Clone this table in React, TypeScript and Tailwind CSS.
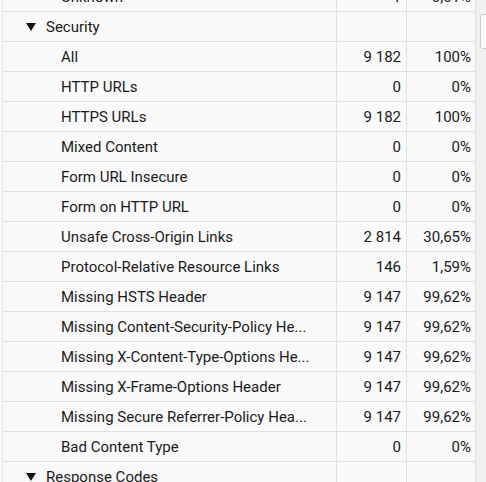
import React from "react";

type Row = { label: string; count?: string; pct?: string; group?: boolean };

const rows: Row[] = [
  { label: "Unknown", count: "1", pct: "0,01%" },
  { label: "Security", group: true },
  { label: "All", count: "9 182", pct: "100%" },
  { label: "HTTP URLs", count: "0", pct: "0%" },
  { label: "HTTPS URLs", count: "9 182", pct: "100%" },
  { label: "Mixed Content", count: "0", pct: "0%" },
  { label: "Form URL Insecure", count: "0", pct: "0%" },
  { label: "Form on HTTP URL", count: "0", pct: "0%" },
  { label: "Unsafe Cross-Origin Links", count: "2 814", pct: "30,65%" },
  { label: "Protocol-Relative Resource Links", count: "146", pct: "1,59%" },
  { label: "Missing HSTS Header", count: "9 147", pct: "99,62%" },
  { label: "Missing Content-Security-Policy He...", count: "9 147", pct: "99,62%" },
  { label: "Missing X-Content-Type-Options He...", count: "9 147", pct: "99,62%" },
  { label: "Missing X-Frame-Options Header", count: "9 147", pct: "99,62%" },
  { label: "Missing Secure Referrer-Policy Hea...", count: "9 147", pct: "99,62%" },
  { label: "Bad Content Type", count: "0", pct: "0%" },
  { label: "Response Codes", group: true },
];

export default function App() {
  return (
    <div
      className="w-[486px] h-[482px] overflow-hidden bg-[#f9f9f9] flex text-[#1b1b1b]"
      style={{ fontFamily: "Roboto, 'Noto Sans', sans-serif" }}
    >
      <div className="w-[476px] mt-[-18px] pl-[2px]">
        {rows.map((r, i) => (
          <div
            key={i}
            className="flex h-[30px] border-b border-[#e0e0e0] text-[15px] leading-[30px]"
          >
            <div className="w-[334px] border-l border-[#e8e8e8] flex items-center whitespace-nowrap overflow-hidden">
              {r.group ? (
                <>
                  <svg className="ml-[23px] mr-[10px]" width="10" height="8" viewBox="0 0 10 8">
                    <polygon points="0,0 10,0 5,8" fill="#111" />
                  </svg>
                  <span>{r.label}</span>
                </>
              ) : (
                <span className="ml-[58px]">{r.label}</span>
              )}
            </div>
            <div className="w-[70px] border-l border-[#e0e0e0] text-right pr-[5px]">
              {r.count}
            </div>
            <div className="w-[70px] border-l border-r border-[#e0e0e0] text-right pr-[4px]">
              {r.pct}
            </div>
          </div>
        ))}
      </div>
      <div className="flex-1 bg-[#f0f0f0] relative">
        <div className="absolute left-[4px] right-[-4px] top-[14px] h-[35px] bg-[#fafafa] border border-[#c8c8c8] rounded-[3px]" />
      </div>
    </div>
  );
}
